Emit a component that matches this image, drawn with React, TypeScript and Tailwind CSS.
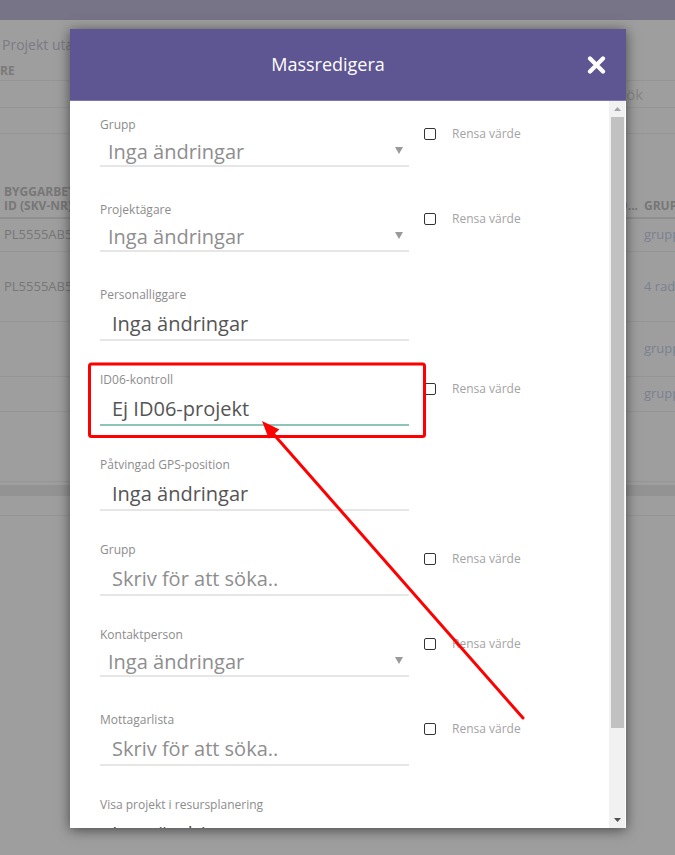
import React from "react";

type Field = {
  label: string;
  value: string;
  kind: "select" | "text" | "search";
  clear: boolean;
  active?: boolean;
};

// Fields in the mass-edit modal, top to bottom
const FIELDS: Field[] = [
  { label: "Grupp", value: "Inga ändringar", kind: "select", clear: true },
  { label: "Projektägare", value: "Inga ändringar", kind: "select", clear: true },
  { label: "Personalliggare", value: "Inga ändringar", kind: "text", clear: false },
  { label: "ID06-kontroll", value: "Ej ID06-projekt", kind: "text", clear: true, active: true },
  { label: "Påtvingad GPS-position", value: "Inga ändringar", kind: "text", clear: false },
  { label: "Grupp", value: "Skriv för att söka..", kind: "search", clear: true },
  { label: "Kontaktperson", value: "Inga ändringar", kind: "select", clear: true },
  { label: "Mottagarlista", value: "Skriv för att söka..", kind: "search", clear: true },
  { label: "Visa projekt i resursplanering", value: "Inga ändringar", kind: "text", clear: false },
];

const FONT = { fontFamily: "'Open Sans', 'Noto Sans', sans-serif" };

export default function App() {
  return (
    <div className="relative w-[675px] h-[855px] overflow-hidden bg-[#9e9e9e]" style={FONT}>
      <BackgroundPage />
      <Modal />
      <Annotation />
    </div>
  );
}

function BackgroundPage() {
  return (
    <div className="flex flex-col text-[#7a7a7a]">
      <div className="h-[20px] bg-[#787487]" />
      <div className="pt-[15px] pl-[2px] text-[14px] leading-[20px] text-[#7b7b86] whitespace-nowrap">
        Projekt utan
      </div>

      <div className="h-[26px] flex items-end pb-[2px] border-b border-[#959595]">
        <span className="text-[12px] font-bold leading-[14px] text-[#7a7a7a]">RE</span>
      </div>
      <div className="h-[27px] flex justify-end items-center border-b border-[#959595]">
        <div className="w-[57px] text-[15px] text-[#858585] whitespace-nowrap">Sök</div>
      </div>
      <div className="h-[26px] border-b border-[#959595]" />

      <div className="h-[50px]" />

      {/* table header */}
      <div className="h-[35px] flex justify-between items-end pb-[4px] border-b-2 border-[#8f8f8f]">
        <div className="w-[70px] pl-[4px] text-[12px] font-bold leading-[14px] text-[#777] whitespace-nowrap overflow-hidden">
          <div>BYGGARBET</div>
          <div>ID (SKV-NR)</div>
        </div>
        <div className="w-[75px] flex text-[12px] font-bold leading-[14px] text-[#777] whitespace-nowrap overflow-hidden">
          <span className="w-[44px] shrink-0 text-right pr-[6px]">D...</span>
          <span>GRUP</span>
        </div>
      </div>

      <Row h="h-[33px]" left="PL5555AB5" right="grupp" />
      <Row h="h-[70px]" left="PL5555AB5" right="4 rade" />
      <Row h="h-[55px]" left="" right="grupp" />
      <Row h="h-[35px]" left="" right="grupp" />
      <div className="h-[70px] border-b border-[#959595]" />
      <div className="h-[3px]" />
      <div className="h-[11px] bg-[#939393]" />
      <div className="h-[20px] border-b border-[#959595]" />
    </div>
  );
}

function Row({ h, left, right }: { h: string; left: string; right: string }) {
  return (
    <div className={`${h} flex justify-between items-center border-b border-[#959595]`}>
      <div className="w-[70px] pl-[4px] text-[13px] text-[#777] whitespace-nowrap overflow-hidden">{left}</div>
      <div className="w-[75px] pl-[44px] text-[13px] text-[#7b8190] whitespace-nowrap overflow-hidden">{right}</div>
    </div>
  );
}

function Modal() {
  return (
    <div className="absolute left-[70px] top-[29px] w-[556px] h-[799px] flex flex-col bg-white shadow-[0_2px_12px_rgba(0,0,0,0.55)]">
      <div className="h-[72px] shrink-0 flex items-center pr-[20px] bg-[#5e5593] border-b border-[#7e77ab]">
        <div className="flex-1 text-center text-[18px] text-white">Massredigera</div>
        <button className="w-[20px] h-[20px] flex items-center justify-center">
          <svg width="19" height="18" viewBox="0 0 19 18">
            <path d="M3 2.5 L16 15.5 M16 2.5 L3 15.5" stroke="#fff" strokeWidth="4.2" strokeLinecap="round" />
          </svg>
        </button>
      </div>

      <div className="flex-1 flex min-h-0">
        <div className="flex-1 overflow-hidden pl-[30px] pt-[15px]">
          {FIELDS.map((f, i) => (
            <FieldRow key={i} field={f} />
          ))}
        </div>
        <Scrollbar />
      </div>
    </div>
  );
}

function FieldRow({ field }: { field: Field }) {
  const isSelect = field.kind === "select";
  const valueColor = field.kind === "text" ? "text-[#555555]" : "text-[#8e8e8e]";
  return (
    <div className="h-[85px] shrink-0 flex">
      <div className="w-[309px] shrink-0">
        <div className="text-[12px] leading-[18px] text-[#8c8c8c] whitespace-nowrap">{field.label}</div>
        <div
          className={`flex items-center pt-[5px] border-b-2 ${isSelect ? "h-[33px] pl-[8px]" : "h-[37px] pl-[12px]"} ${
            field.active ? "border-[#8dc3b8]" : "border-[#e6e6e6]"
          }`}
        >
          <span className={`text-[20px] leading-[28px] ${valueColor} whitespace-nowrap`}>{field.value}</span>
          {isSelect && (
            <svg className="ml-auto mr-[6px] mb-[3px]" width="8" height="7" viewBox="0 0 8 7">
              <path d="M0 0 H8 L4 7 Z" fill="#9a9a9a" />
            </svg>
          )}
        </div>
      </div>
      {field.clear && (
        <div className="ml-[15px] pt-[12px] flex items-start gap-[16px]">
          <div className="w-[12px] h-[12px] rounded-[2px] border border-[#333] bg-white" />
          <span className="text-[12px] leading-[12px] text-[#a3a3a3] whitespace-nowrap">Rensa värde</span>
        </div>
      )}
    </div>
  );
}

function Scrollbar() {
  return (
    <div className="w-[16px] mr-[1px] shrink-0 flex flex-col bg-[#f1f1f1]">
      <div className="h-[16px] flex items-center justify-center">
        <svg width="7" height="4" viewBox="0 0 7 4">
          <path d="M0 4 L3.5 0 L7 4 Z" fill="#a3a3a3" />
        </svg>
      </div>
      <div className="h-[611px] ml-[2px] mr-[1px] bg-[#c1c1c1]" />
      <div className="flex-1 flex items-end justify-center pb-[6px]">
        <svg width="7" height="4" viewBox="0 0 7 4">
          <path d="M0 0 L7 0 L3.5 4 Z" fill="#505050" />
        </svg>
      </div>
    </div>
  );
}

function Annotation() {
  return (
    <svg className="absolute inset-0 pointer-events-none" width="675" height="855" viewBox="0 0 675 855">
      <rect x="89.5" y="364" width="335" height="72.5" rx="2" fill="none" stroke="#ff0000" strokeWidth="3" />
      <line x1="273" y1="433.5" x2="523" y2="718" stroke="#ff0000" strokeWidth="3" strokeLinecap="round" />
      <polygon points="262,421 268.8,438.8 279.4,429.6" fill="#ff0000" />
    </svg>
  );
}
